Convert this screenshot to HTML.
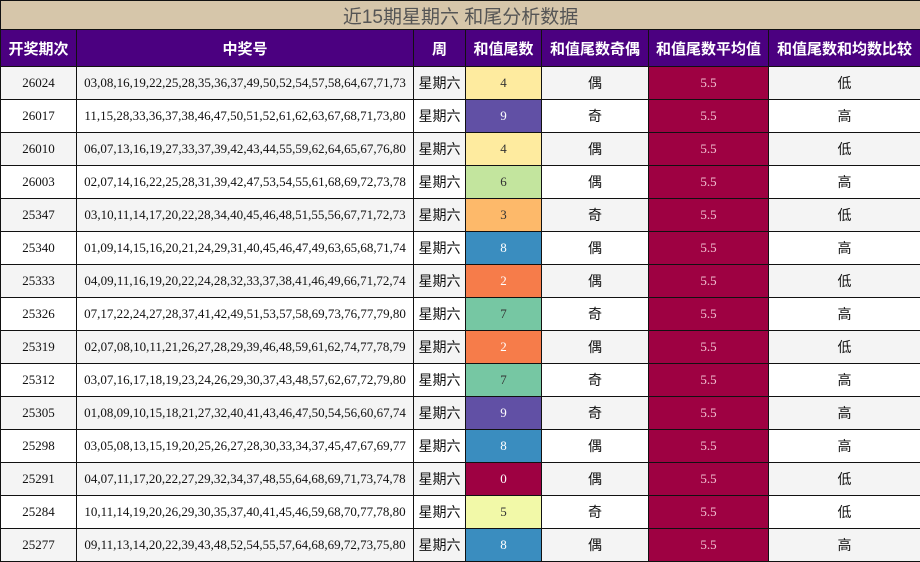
<!DOCTYPE html>
<html><head><meta charset="utf-8"><style>
body{margin:0;width:920px;height:562px;overflow:hidden;background:#fff;font-family:"Liberation Serif","Noto Serif CJK SC",serif;}
table{border-collapse:collapse;table-layout:fixed;width:920px;}
td,th{border:1px solid #111;text-align:center;padding:0;}
tr.t td{background:#d6c6aa!important;height:28px;font-family:"Liberation Sans","Noto Sans CJK SC",sans-serif;font-size:19px;color:#555;}
th{background:#4b0080;color:#fff;height:36px;font-family:"Liberation Sans","Noto Sans CJK SC",sans-serif;font-size:15px;font-weight:bold;}
tbody td{height:32px;font-size:13px;color:#111;}
tr.r:nth-child(odd) td{background:#f4f4f4}
tr.r:nth-child(even) td{background:#fff}
.cj{font-family:"Liberation Sans","Noto Sans CJK SC",sans-serif;font-size:14px;}
td.a{background:#9e0142!important;color:#f0c0d0;}
.c0{background:#9e0142!important;color:#fff}
.c2{background:#f67c4a!important;color:#fff}
.c3{background:#fdb96a!important;color:#333}
.c4{background:#feeb9f!important;color:#333}
.c5{background:#f2f9a8!important;color:#333}
.c6{background:#c3e59e!important;color:#333}
.c7{background:#76c7a3!important;color:#333}
.c8{background:#3a8dbf!important;color:#fff}
.c9{background:#6150a5!important;color:#fff}
</style></head><body>
<table>
<colgroup><col style="width:76px"><col style="width:337px"><col style="width:52px"><col style="width:76px"><col style="width:107px"><col style="width:120px"><col style="width:152px"></colgroup>
<thead>
<tr class="t"><td colspan="7">近15期星期六 和尾分析数据</td></tr>
<tr><th>开奖期次</th><th>中奖号</th><th>周</th><th>和值尾数</th><th>和值尾数奇偶</th><th>和值尾数平均值</th><th>和值尾数和均数比较</th></tr>
</thead>
<tbody>
<tr class="r"><td>26024</td><td>03,08,16,19,22,25,28,35,36,37,49,50,52,54,57,58,64,67,71,73</td><td class="cj">星期六</td><td class="c4">4</td><td class="cj">偶</td><td class="a">5.5</td><td class="cj">低</td></tr>
<tr class="r"><td>26017</td><td>11,15,28,33,36,37,38,46,47,50,51,52,61,62,63,67,68,71,73,80</td><td class="cj">星期六</td><td class="c9">9</td><td class="cj">奇</td><td class="a">5.5</td><td class="cj">高</td></tr>
<tr class="r"><td>26010</td><td>06,07,13,16,19,27,33,37,39,42,43,44,55,59,62,64,65,67,76,80</td><td class="cj">星期六</td><td class="c4">4</td><td class="cj">偶</td><td class="a">5.5</td><td class="cj">低</td></tr>
<tr class="r"><td>26003</td><td>02,07,14,16,22,25,28,31,39,42,47,53,54,55,61,68,69,72,73,78</td><td class="cj">星期六</td><td class="c6">6</td><td class="cj">偶</td><td class="a">5.5</td><td class="cj">高</td></tr>
<tr class="r"><td>25347</td><td>03,10,11,14,17,20,22,28,34,40,45,46,48,51,55,56,67,71,72,73</td><td class="cj">星期六</td><td class="c3">3</td><td class="cj">奇</td><td class="a">5.5</td><td class="cj">低</td></tr>
<tr class="r"><td>25340</td><td>01,09,14,15,16,20,21,24,29,31,40,45,46,47,49,63,65,68,71,74</td><td class="cj">星期六</td><td class="c8">8</td><td class="cj">偶</td><td class="a">5.5</td><td class="cj">高</td></tr>
<tr class="r"><td>25333</td><td>04,09,11,16,19,20,22,24,28,32,33,37,38,41,46,49,66,71,72,74</td><td class="cj">星期六</td><td class="c2">2</td><td class="cj">偶</td><td class="a">5.5</td><td class="cj">低</td></tr>
<tr class="r"><td>25326</td><td>07,17,22,24,27,28,37,41,42,49,51,53,57,58,69,73,76,77,79,80</td><td class="cj">星期六</td><td class="c7">7</td><td class="cj">奇</td><td class="a">5.5</td><td class="cj">高</td></tr>
<tr class="r"><td>25319</td><td>02,07,08,10,11,21,26,27,28,29,39,46,48,59,61,62,74,77,78,79</td><td class="cj">星期六</td><td class="c2">2</td><td class="cj">偶</td><td class="a">5.5</td><td class="cj">低</td></tr>
<tr class="r"><td>25312</td><td>03,07,16,17,18,19,23,24,26,29,30,37,43,48,57,62,67,72,79,80</td><td class="cj">星期六</td><td class="c7">7</td><td class="cj">奇</td><td class="a">5.5</td><td class="cj">高</td></tr>
<tr class="r"><td>25305</td><td>01,08,09,10,15,18,21,27,32,40,41,43,46,47,50,54,56,60,67,74</td><td class="cj">星期六</td><td class="c9">9</td><td class="cj">奇</td><td class="a">5.5</td><td class="cj">高</td></tr>
<tr class="r"><td>25298</td><td>03,05,08,13,15,19,20,25,26,27,28,30,33,34,37,45,47,67,69,77</td><td class="cj">星期六</td><td class="c8">8</td><td class="cj">偶</td><td class="a">5.5</td><td class="cj">高</td></tr>
<tr class="r"><td>25291</td><td>04,07,11,17,20,22,27,29,32,34,37,48,55,64,68,69,71,73,74,78</td><td class="cj">星期六</td><td class="c0">0</td><td class="cj">偶</td><td class="a">5.5</td><td class="cj">低</td></tr>
<tr class="r"><td>25284</td><td>10,11,14,19,20,26,29,30,35,37,40,41,45,46,59,68,70,77,78,80</td><td class="cj">星期六</td><td class="c5">5</td><td class="cj">奇</td><td class="a">5.5</td><td class="cj">低</td></tr>
<tr class="r"><td>25277</td><td>09,11,13,14,20,22,39,43,48,52,54,55,57,64,68,69,72,73,75,80</td><td class="cj">星期六</td><td class="c8">8</td><td class="cj">偶</td><td class="a">5.5</td><td class="cj">高</td></tr>
</tbody></table>
</body></html>
